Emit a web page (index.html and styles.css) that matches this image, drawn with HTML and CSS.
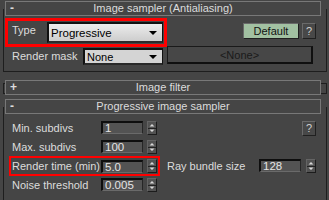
FILE: index.html
```html
<!DOCTYPE html>
<html lang="en">
<head>
    <meta charset="UTF-8">
    <title>Image sampler</title>
    <link rel="stylesheet" href="styles.css">
</head>
<body>
    <div class="panel">
        <!-- Image sampler (open) -->
        <div class="rollout">
            <div class="rollout-title"><span class="toggle">-</span><span>Image sampler (Antialiasing)</span><span></span></div>
            <div class="rollout-body sampler-body">
                <div class="type-row">
                    <div class="highlight type-box">
                        <span class="label type-label">Type</span>
                        <div class="combo combo-type"><span>Progressive</span><span class="arrow"></span></div>
                    </div>
                    <button class="btn btn-default">Default</button>
                    <button class="btn btn-help">?</button>
                </div>
                <div class="mask-row">
                    <span class="label mask-label">Render mask</span>
                    <div class="combo combo-mask"><span>None</span><span class="arrow"></span></div>
                    <button class="btn btn-none">&lt;None&gt;</button>
                </div>
            </div>
        </div>

        <!-- Image filter (closed) -->
        <div class="rollout closed">
            <div class="rollout-title"><span class="toggle">+</span><span>Image filter</span><span></span></div>
            <div class="bracket"></div>
        </div>

        <!-- Progressive image sampler (open) -->
        <div class="rollout progressive">
            <div class="rollout-title"><span class="toggle">-</span><span>Progressive image sampler</span><span></span></div>
            <div class="rollout-body prog-body">
                <div class="spin-row">
                    <span class="label">Min. subdivs</span>
                    <div class="field">1</div>
                    <span class="spinner"><svg width="10" height="14" viewBox="0 0 10 14"><path d="M2.5 5.5 L5 3 L7.5 5.5 Z M2.5 8.5 L7.5 8.5 L5 11 Z" fill="#d8d8d8"/></svg></span>
                    <button class="btn btn-help row-help">?</button>
                </div>
                <div class="spin-row">
                    <span class="label">Max. subdivs</span>
                    <div class="field">100</div>
                    <span class="spinner"><svg width="10" height="14" viewBox="0 0 10 14"><path d="M2.5 5.5 L5 3 L7.5 5.5 Z M2.5 8.5 L7.5 8.5 L5 11 Z" fill="#d8d8d8"/></svg></span>
                </div>
                <div class="spin-row">
                    <div class="highlight time-box">
                        <span class="label">Render time (min)</span>
                        <div class="field">5.0</div>
                        <span class="spinner"><svg width="10" height="14" viewBox="0 0 10 14"><path d="M2.5 5.5 L5 3 L7.5 5.5 Z M2.5 8.5 L7.5 8.5 L5 11 Z" fill="#d8d8d8"/></svg></span>
                    </div>
                    <span class="label ray-label">Ray bundle size</span>
                    <div class="field">128</div>
                    <span class="spinner ray-spinner"><svg width="10" height="14" viewBox="0 0 10 14"><path d="M2.5 5.5 L5 3 L7.5 5.5 Z M2.5 8.5 L7.5 8.5 L5 11 Z" fill="#d8d8d8"/></svg></span>
                </div>
                <div class="spin-row">
                    <span class="label">Noise threshold</span>
                    <div class="field">0.005</div>
                    <span class="spinner"><svg width="10" height="14" viewBox="0 0 10 14"><path d="M2.5 5.5 L5 3 L7.5 5.5 Z M2.5 8.5 L7.5 8.5 L5 11 Z" fill="#d8d8d8"/></svg></span>
                </div>
            </div>
        </div>
    </div>
</body>
</html>
```

FILE: styles.css
```css
body {
    margin: 0;
    background-color: #454545;
    font-family: "Liberation Sans", Arial, sans-serif;
    font-size: 11px;
    color: #dcdcdc;
}
.panel {
    width: 329px;
    height: 200px;
    overflow: hidden;
    padding-top: 1px;
    box-sizing: border-box;
}
.rollout {
    margin: 0 2px 0 3px;
}
.rollout-title {
    position: relative;
    z-index: 1;
    display: grid;
    grid-template-columns: 1fr auto 1fr;
    height: 15px;
    margin: 0 6px 0 2px;
    padding: 0 4px;
    border: 1px solid #787878;
    background-color: #454545;
    line-height: 13px;
    box-sizing: border-box;
}
.toggle {
    font-weight: bold;
    font-size: 12px;
}
.rollout-body {
    margin-top: -7px;
    border: 1px solid #1e1e1e;
    border-top: none;
}
.sampler-body {
    padding: 9px 0 6px 0;
}
.closed {
    margin-top: 8px;
}
.bracket {
    height: 9px;
    margin-top: -12px;
    border: 1px solid #1e1e1e;
}
.progressive {
    margin-top: 5px;
}
.prog-body {
    padding: 14px 0 10px 0;
}

.label {
    white-space: nowrap;
}
.highlight {
    border: 3px solid #ff0000;
    box-sizing: border-box;
}

/* sampler rows */
.type-row {
    display: flex;
    align-items: flex-start;
}
.type-box {
    display: flex;
    align-items: flex-start;
    width: 162px;
    height: 29px;
    margin-left: 1px;
    padding: 1px 1px 0 4px;
}
.type-label {
    flex: 0 0 35px;
    padding-top: 2px;
}
.combo {
    display: flex;
    align-items: center;
    justify-content: space-between;
    box-sizing: border-box;
    border: 2px solid #101010;
    border-right-width: 1px;
    border-bottom-color: #2a2a2a;
    background: linear-gradient(#ececec, #cdcdcd);
    color: #000;
}
.combo-type {
    width: 116px;
    height: 21px;
    padding: 0 5px 0 2px;
    font-size: 11.5px;
}
.combo-mask {
    width: 80px;
    height: 17px;
    margin-top: 2px;
    padding: 0 5px 0 2px;
    background: #d4d4d4;
}
.arrow {
    width: 0;
    height: 0;
    border-left: 4px solid transparent;
    border-right: 4px solid transparent;
    border-top: 4px solid #000;
}
.btn {
    font-family: inherit;
    font-size: 11px;
    padding: 0;
    box-sizing: border-box;
    border: 1px solid #202020;
    border-top-color: #6a6a6a;
    border-left-color: #6a6a6a;
}
.btn-default {
    width: 56px;
    height: 16px;
    margin: 5px 0 0 76px;
    background-color: #a2c1a2;
    color: #111;
}
.btn-help {
    width: 14px;
    height: 16px;
    margin: 5px 0 0 3px;
    background-color: #484848;
    color: #cfcfcf;
}
.mask-row {
    display: flex;
    align-items: flex-start;
    margin-top: -1px;
}
.mask-label {
    flex: 0 0 71px;
    margin-left: 8px;
    padding-top: 4px;
}
.btn-none {
    width: 146px;
    height: 18px;
    margin-left: 4px;
    background-color: #474747;
    color: #1a1a1a;
    border: 2px solid #101010;
    border-top: 1px solid #1a1a1a;
    border-left: 1px solid #1a1a1a;
}

/* progressive rows */
.spin-row {
    display: flex;
    align-items: center;
    height: 13px;
    margin-bottom: 6px;
    padding-left: 8px;
}
.spin-row .label {
    flex: 0 0 89px;
}
.field {
    width: 42px;
    height: 13px;
    box-sizing: border-box;
    padding-left: 2px;
    border: 2px solid #0e0e0e;
    border-right: 1px solid #262626;
    border-bottom: 1px solid #6a6a6a;
    background-color: #535353;
    color: #e4e4e4;
    line-height: 11px;
    font-size: 11.5px;
}
.spinner {
    display: block;
    width: 10px;
    height: 14px;
    margin-left: 4px;
    box-sizing: border-box;
    border: 1px solid #1c1c1c;
    border-top-color: #646464;
    border-left-color: #646464;
    background: linear-gradient(#525252 0 6px, #222 6px 7px, #525252 7px);
}
.spinner svg {
    display: block;
    margin: -1px 0 0 -1px;
}
.row-help {
    height: 15px;
    margin: 1px 10px 0 auto;
}
.time-box {
    display: flex;
    align-items: center;
    align-self: flex-start;
    margin: -3px 0 0 -3px;
    padding: 1px 1px 1px 1px;
    border-width: 2px;
}
.ray-label {
    margin-left: 7px;
}
.spin-row .ray-label {
    flex: 0 0 92px;
}
.ray-spinner {
    margin-left: 5px;
}
```
